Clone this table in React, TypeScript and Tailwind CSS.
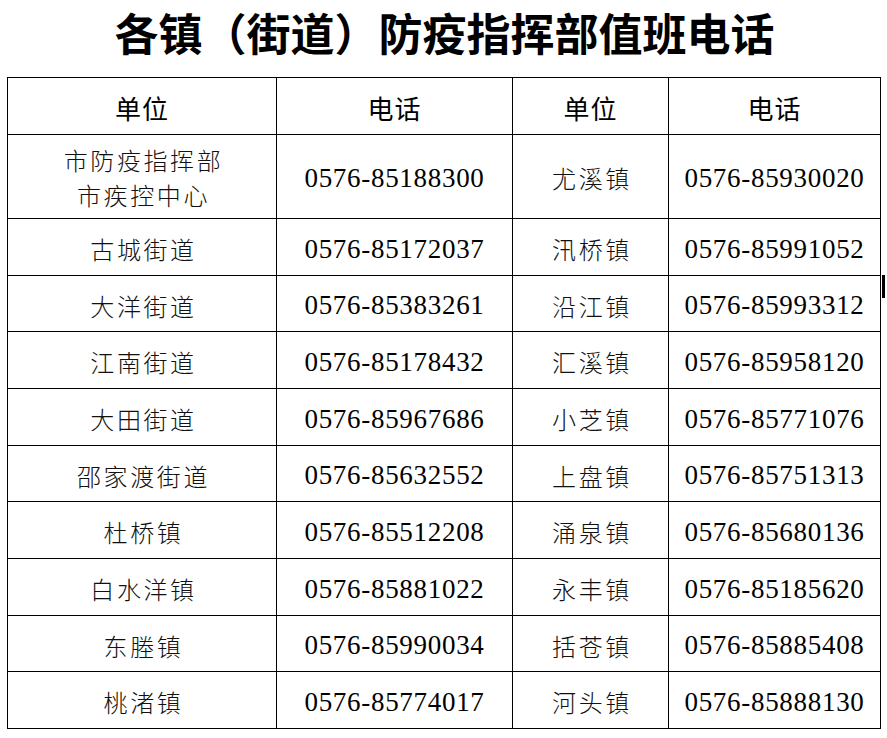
const rows: [string, string, string, string][] = [
  ["古城街道", "0576-85172037", "汛桥镇", "0576-85991052"],
  ["大洋街道", "0576-85383261", "沿江镇", "0576-85993312"],
  ["江南街道", "0576-85178432", "汇溪镇", "0576-85958120"],
  ["大田街道", "0576-85967686", "小芝镇", "0576-85771076"],
  ["邵家渡街道", "0576-85632552", "上盘镇", "0576-85751313"],
  ["杜桥镇", "0576-85512208", "涌泉镇", "0576-85680136"],
  ["白水洋镇", "0576-85881022", "永丰镇", "0576-85185620"],
  ["东塍镇", "0576-85990034", "括苍镇", "0576-85885408"],
  ["桃渚镇", "0576-85774017", "河头镇", "0576-85888130"],
]

const cell = "flex items-center justify-center border-r border-b border-black"
const cjk = "font-['Noto_Sans_CJK_SC',sans-serif]"
const name = `${cell} ${cjk} text-[24px] font-light tracking-[2.6px] pl-[3px] text-[#111]`
const phone = `${cell} font-['Liberation_Serif','Times_New_Roman',serif] text-[27px] tracking-[0.7px] pt-[4px] text-black`
const head = `${cell} ${cjk} text-[26px] tracking-[1px] pt-[2px] text-black`

export default function App() {
  return (
    <div className="relative w-[887px] h-[738px] bg-white">
      <h1 className={`${cjk} pt-[10px] text-center text-[44px] leading-[44px] font-bold text-black pl-[2px]`}>
        各镇（街道）防疫指挥部值班电话
      </h1>

      <div className="mt-[23px] ml-[7px] grid w-[874px] grid-cols-[269px_236px_156px_212px] grid-rows-[57px_84px_57px_56px_57px_57px_56px_57px_57px_56px_57px] border-l border-t border-black">
        <div className={head}>单位</div>
        <div className={head}>电话</div>
        <div className={head}>单位</div>
        <div className={head}>电话</div>

        <div className={`${name} flex-col leading-[35px]`}>
          <span>市防疫指挥部</span>
          <span>市疾控中心</span>
        </div>
        <div className={phone}>0576-85188300</div>
        <div className={`${name} pt-[3px]`}>尤溪镇</div>
        <div className={phone}>0576-85930020</div>

        {rows.map((r) => (
          <div key={r[0]} className="contents">
            <div className={`${name} pt-[4px]`}>{r[0]}</div>
            <div className={phone}>{r[1]}</div>
            <div className={`${name} pt-[4px]`}>{r[2]}</div>
            <div className={phone}>{r[3]}</div>
          </div>
        ))}
      </div>

      {/* stray caret mark beside the table */}
      <div className="absolute left-[882px] top-[275px] h-[23px] w-[3px] bg-black" />
    </div>
  )
}
